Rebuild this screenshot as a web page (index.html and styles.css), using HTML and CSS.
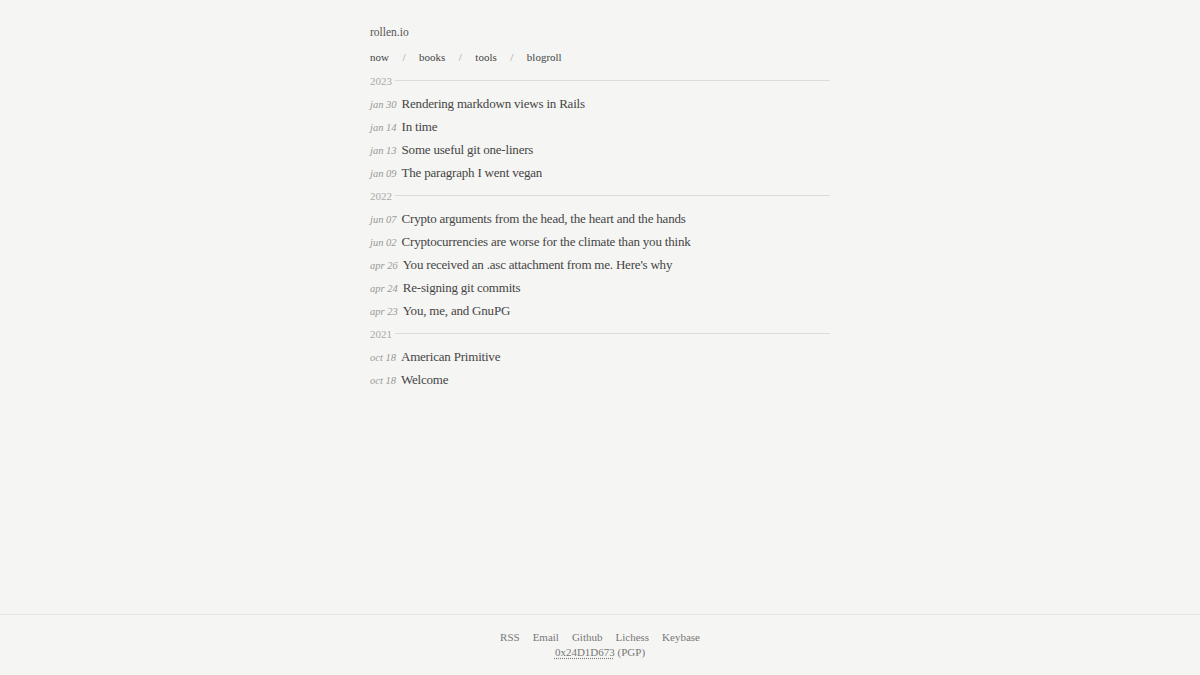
FILE: index.html
```html
<!DOCTYPE html>
<html lang="en">
<head>
<meta charset="utf-8">
<title>rollen.io</title>
<link rel="stylesheet" href="styles.css">
</head>
<body>
<div class="page">
  <main class="main">
    <header class="header">
      <a class="site" href="#">rollen.io</a>
      <nav class="nav">
        <a href="#">now</a><span class="sep">/</span>
        <a href="#">books</a><span class="sep">/</span>
        <a href="#">tools</a><span class="sep">/</span>
        <a href="#">blogroll</a>
      </nav>
    </header>
    <section class="posts">
      <div class="year"><span>2023</span><i class="rule"></i></div>
      <div class="post"><span class="date">jan 30</span><a href="#">Rendering markdown views in Rails</a></div>
      <div class="post"><span class="date">jan 14</span><a href="#">In time</a></div>
      <div class="post"><span class="date">jan 13</span><a href="#">Some useful git one-liners</a></div>
      <div class="post"><span class="date">jan 09</span><a href="#">The paragraph I went vegan</a></div>
      <div class="year"><span>2022</span><i class="rule"></i></div>
      <div class="post"><span class="date">jun 07</span><a href="#">Crypto arguments from the head, the heart and the hands</a></div>
      <div class="post"><span class="date">jun 02</span><a href="#">Cryptocurrencies are worse for the climate than you think</a></div>
      <div class="post"><span class="date">apr 26</span><a href="#">You received an .asc attachment from me. Here's why</a></div>
      <div class="post"><span class="date">apr 24</span><a href="#">Re-signing git commits</a></div>
      <div class="post"><span class="date">apr 23</span><a href="#">You, me, and GnuPG</a></div>
      <div class="year"><span>2021</span><i class="rule"></i></div>
      <div class="post"><span class="date">oct 18</span><a href="#">American Primitive</a></div>
      <div class="post"><span class="date">oct 18</span><a href="#">Welcome</a></div>
    </section>
  </main>
  <footer class="footer">
    <div class="links">
      <a href="#">RSS</a><a href="#">Email</a><a href="#">Github</a><a href="#">Lichess</a><a href="#">Keybase</a>
    </div>
    <div class="pgp"><a class="key" href="#">0x24D1D673</a> (PGP)</div>
  </footer>
</div>
</body>
</html>
```
FILE: styles.css
```css
html, body {
  margin: 0;
  padding: 0;
  background: #f5f5f3;
}
body {
  font-family: "Liberation Serif", "Times New Roman", serif;
  color: #444;
}
a {
  color: inherit;
  text-decoration: none;
}
.page {
  min-height: 675px;
  display: flex;
  flex-direction: column;
}
.main {
  flex: 1;
  width: 460px;
  margin: 0 auto;
  padding-top: 24px;
}
.header {
  display: flex;
  flex-direction: column;
}
.site {
  font-size: 11.5px;
  line-height: 16px;
  color: #555;
}
.nav {
  margin-top: 9px;
  font-size: 11px;
  line-height: 16px;
  color: #444;
  display: flex;
  align-items: center;
}
.sep {
  color: #999;
  margin: 0 13.5px;
}
.posts {
  margin-top: 4px;
}
.year {
  height: 23px;
  display: flex;
  align-items: center;
  font-size: 11px;
  color: #aaa;
}
.rule {
  flex: 1;
  height: 1px;
  background: #dcdcda;
  margin-left: 3px;
}
.post {
  height: 23px;
  display: flex;
  align-items: center;
  font-size: 13px;
  letter-spacing: -0.2px;
  color: #454545;
}
.date {
  font-style: italic;
  font-size: 10.5px;
  letter-spacing: 0;
  color: #999;
  margin-right: 5px;
  padding-top: 2px;
}
.footer {
  border-top: 1px solid #e6e6e4;
  padding: 15px 0 15px;
  text-align: center;
  font-size: 11px;
  line-height: 15px;
  color: #777;
}
.links {
  display: flex;
  justify-content: center;
  gap: 13px;
}
.pgp {
  font-size: 11px;
}
.key {
  text-decoration: underline dotted;
  text-underline-offset: 2px;
}
```
